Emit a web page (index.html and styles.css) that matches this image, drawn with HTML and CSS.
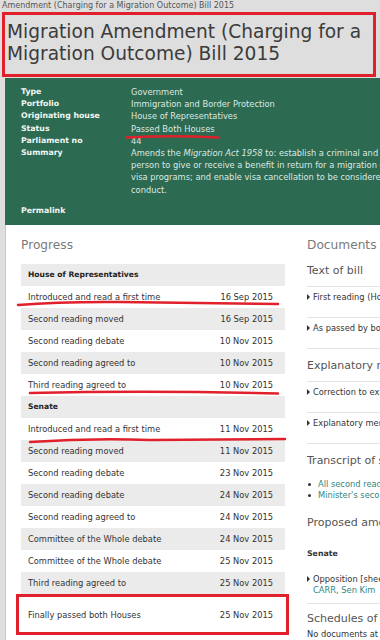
FILE: index.html
```html
<!DOCTYPE html>
<html lang="en">
<head>
  <meta charset="UTF-8">
  <meta name="viewport" content="width=device-width, initial-scale=1.0">
  <title>Migration Amendment (Charging for a Migration Outcome) Bill 2015</title>
  <link rel="stylesheet" href="styles.css">
</head>
<body>
  <div class="crumb">Amendment (Charging for a Migration Outcome) Bill 2015</div>
  <h1 class="title">Migration Amendment (Charging for a<br>Migration Outcome) Bill 2015</h1>

  <div class="main">
    <div class="bill-info">
      <dl class="facts">
        <dt>Type</dt><dd>Government</dd>
        <dt>Portfolio</dt><dd>Immigration and Border Protection</dd>
        <dt>Originating house</dt><dd>House of Representatives</dd>
        <dt>Status</dt><dd>Passed Both Houses</dd>
        <dt>Parliament no</dt><dd>44</dd>
        <dt>Summary</dt>
        <dd>Amends the <em>Migration Act 1958</em> to: establish a criminal and civil penalty regime for a<br>person to give or receive a benefit in return for a migration outcome in relation to certain<br>visa programs; and enable visa cancellation to be considered for visa holders who engage in such<br>conduct.</dd>
      </dl>
      <div class="permalink">Permalink</div>
    </div>

    <div class="content">
      <div class="progress">
        <h2 class="section-title">Progress</h2>
        <table class="stages">
          <tr class="house"><td colspan="2">House of Representatives</td></tr>
          <tr><td>Introduced and read a first time</td><td class="date">16 Sep 2015</td></tr>
          <tr><td>Second reading moved</td><td class="date">16 Sep 2015</td></tr>
          <tr><td>Second reading debate</td><td class="date">10 Nov 2015</td></tr>
          <tr><td>Second reading agreed to</td><td class="date">10 Nov 2015</td></tr>
          <tr><td>Third reading agreed to</td><td class="date">10 Nov 2015</td></tr>
          <tr class="house"><td colspan="2">Senate</td></tr>
          <tr><td>Introduced and read a first time</td><td class="date">11 Nov 2015</td></tr>
          <tr><td>Second reading moved</td><td class="date">11 Nov 2015</td></tr>
          <tr><td>Second reading debate</td><td class="date">23 Nov 2015</td></tr>
          <tr><td>Second reading debate</td><td class="date">24 Nov 2015</td></tr>
          <tr><td>Second reading agreed to</td><td class="date">24 Nov 2015</td></tr>
          <tr><td>Committee of the Whole debate</td><td class="date">24 Nov 2015</td></tr>
          <tr><td>Committee of the Whole debate</td><td class="date">25 Nov 2015</td></tr>
          <tr><td>Third reading agreed to</td><td class="date">25 Nov 2015</td></tr>
        </table>
        <table class="stages final">
          <tr><td>Finally passed both Houses</td><td class="date">25 Nov 2015</td></tr>
        </table>
      </div>

      <div class="docs">
        <h2 class="section-title">Documents</h2>
        <h3 class="doc-head">Text of bill</h3>
        <div class="doc-item">First reading (House of Representatives)</div>
        <div class="doc-item">As passed by both Houses</div>
        <h3 class="doc-head">Explanatory memoranda</h3>
        <div class="doc-item">Correction to explanatory memorandum</div>
        <div class="doc-item">Explanatory memorandum</div>
        <h3 class="doc-head plain">Transcript of speeches</h3>
        <ul class="links">
          <li>All second reading speeches</li>
          <li>Minister's second reading speech</li>
        </ul>
        <h3 class="doc-head plain spaced">Proposed amendments</h3>
        <div class="chamber">Senate</div>
        <div class="doc-item amend">Opposition [sheet 7783]<br><span class="link">CARR, Sen Kim</span></div>
        <h3 class="doc-head plain tight">Schedules of amendments</h3>
        <div class="none">No documents at this time</div>
      </div>
    </div>
  </div>

  <svg class="marks" width="380" height="640" viewBox="0 0 380 640">
    <rect x="3.5" y="13.5" width="371" height="62" />
    <path d="M127 137.5 Q172 135 218 137.5" />
    <path d="M18 305 Q60 301.5 120 302 T278 304" />
    <path d="M30 393 Q150 390.5 278 393.5" />
    <path d="M30 442 Q90 438 150 440 L285 439" />
    <rect x="17.5" y="595.5" width="270" height="38" />
  </svg>
</body>
</html>
```

FILE: styles.css
```css
body {
  margin: 0;
  width: 380px;
  height: 640px;
  overflow: hidden;
  position: relative;
  background-color: #dedede;
  font-family: 'DejaVu Sans', Verdana, sans-serif;
  color: #333;
}

.crumb {
  height: 12px;
  padding-left: 2px;
  font-size: 8px;
  line-height: 11px;
  color: #555;
  white-space: nowrap;
}

.title {
  margin: 0;
  padding: 9px 0 13px 7px;
  font-size: 18.6px;
  font-weight: normal;
  line-height: 22px;
  color: #3b3b3b;
  white-space: nowrap;
}

.main {
  margin-left: 5px;
}

.bill-info {
  background-color: #2d6a52;
  padding: 8px 0 8px 16px;
  color: #dce9e2;
  font-size: 8.3px;
  line-height: 12.2px;
  white-space: nowrap;
}

.facts {
  display: grid;
  grid-template-columns: 110px auto;
  margin: 0;
}

.facts dt,
.permalink {
  font-weight: bold;
  font-size: 7.8px;
  color: #f2f7f4;
}

.facts dd {
  margin: 0;
}

.permalink {
  margin-top: 9px;
  line-height: 12px;
}

.content {
  display: flex;
  height: 420px;
  padding: 12px 0 0 15px;
  background-color: #fff;
  border-left: 1px solid #c9c9c9;
}

.progress {
  width: 264px;
  flex-shrink: 0;
}

.section-title {
  margin: 0 0 11px;
  font-size: 12.2px;
  font-weight: normal;
  line-height: 16px;
  color: #7a7a7a;
  white-space: nowrap;
}

.stages {
  width: 100%;
  border-collapse: collapse;
  font-size: 8.3px;
  color: #333;
}

.stages td {
  height: 22px;
  padding: 0 12px 0 7px;
  white-space: nowrap;
}

.stages tr:nth-child(odd) td {
  background-color: #ebebeb;
}

.stages .house td {
  font-weight: bold;
  font-size: 7.6px;
  color: #222;
}

.stages .date {
  text-align: right;
}

.stages.final {
  margin-top: 10px;
}

.stages.final tr td {
  background-color: #fff;
}

.docs {
  width: 230px;
  flex-shrink: 0;
  margin-left: 22px;
  white-space: nowrap;
}

.doc-head {
  margin: 10px 0 0;
  padding-bottom: 8px;
  font-size: 11px;
  font-weight: normal;
  line-height: 14px;
  color: #555;
  border-bottom: 1px solid #e3e3e3;
}

.section-title + .doc-head {
  margin-top: 0;
}

.doc-head.plain {
  padding-bottom: 0;
  border-bottom: none;
}

.doc-head.spaced {
  margin-top: 15px;
}

.doc-head.tight {
  margin-top: 8px;
}

.doc-item {
  position: relative;
  padding: 5px 0 15px 6px;
  font-size: 8.3px;
  line-height: 10px;
  color: #333;
  border-bottom: 1px solid #e3e3e3;
}

.doc-item::before {
  content: "";
  position: absolute;
  left: 0;
  top: 7px;
  border-left: 3px solid #333;
  border-top: 3px solid transparent;
  border-bottom: 3px solid transparent;
}

.doc-item.amend {
  margin-top: 10px;
  padding-bottom: 7px;
  line-height: 11px;
}

.link,
.links {
  color: #2f8783;
}

.links {
  list-style: none;
  margin: 11px 0 0;
  padding: 0;
  font-size: 8.3px;
  line-height: 11px;
}

.links li {
  position: relative;
  padding-left: 11px;
}

.links li::before {
  content: "";
  position: absolute;
  left: 1px;
  top: 4px;
  width: 3px;
  height: 3px;
  border-radius: 50%;
  background-color: #333;
}

.chamber {
  margin-top: 19px;
  font-size: 7.8px;
  font-weight: bold;
  line-height: 10px;
  color: #333;
}

.none {
  margin-top: 3px;
  font-size: 8.3px;
  line-height: 10px;
  color: #333;
}

.marks {
  position: absolute;
  left: 0;
  top: 0;
  pointer-events: none;
  fill: none;
  stroke: #e0202a;
  stroke-width: 3;
  stroke-linecap: round;
}

.marks path {
  stroke-width: 2.5;
}
```
